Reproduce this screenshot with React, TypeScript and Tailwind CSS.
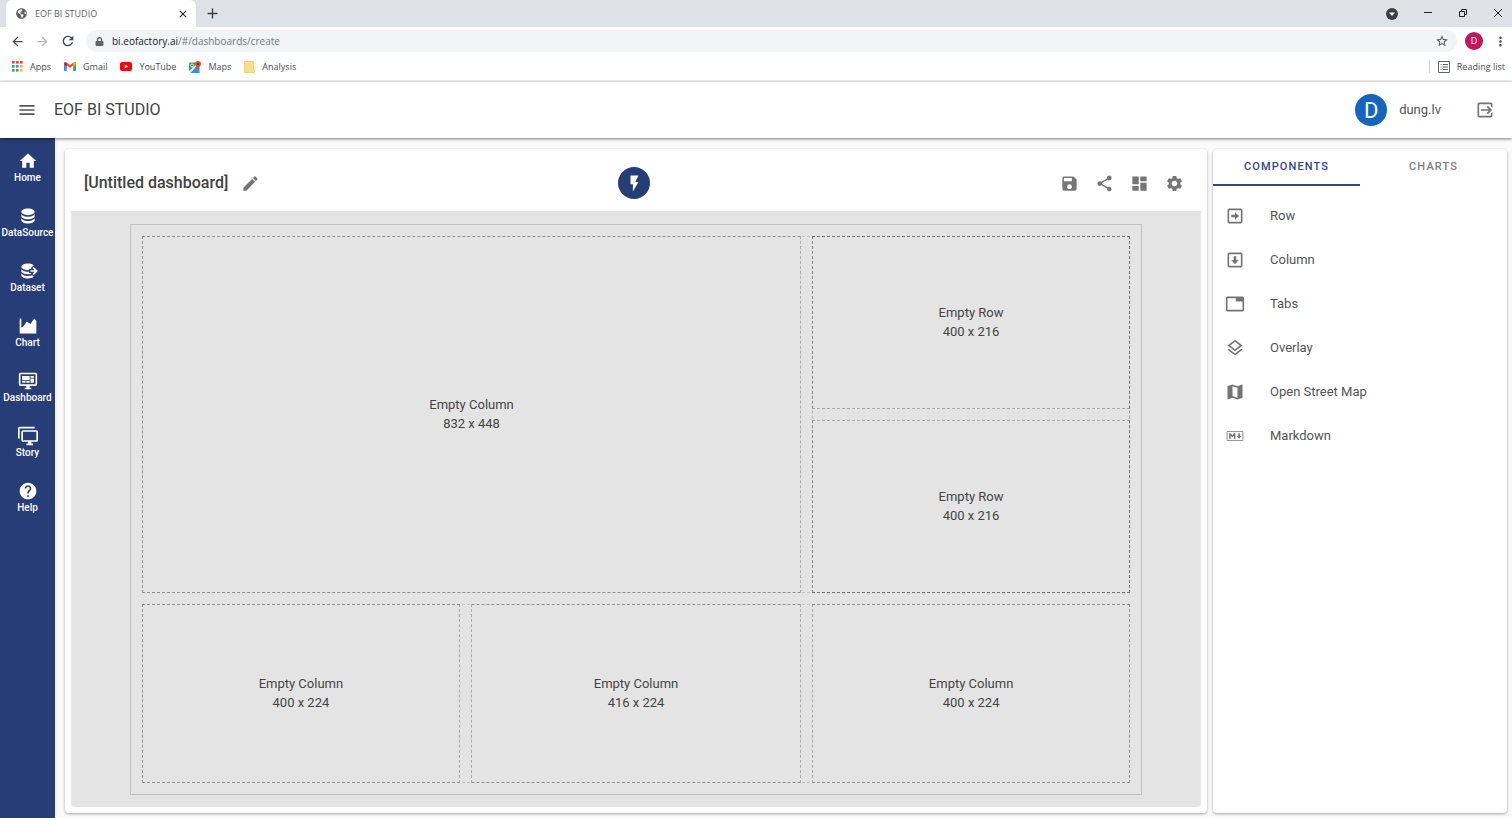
import type { ReactNode } from "react";
import { MdSave, MdShare, MdDashboard, MdSettings, MdEdit, MdFlashOn, MdHelp, MdMap, MdStarBorder, MdArrowBack, MdArrowForward, MdRefresh, MdClose, MdAdd, MdMoreVert } from "react-icons/md";
import { FaGlobeAmericas, FaLock } from "react-icons/fa";

function Glyph({ d, className = "size-5" }: { d: string; className?: string }) {
  return (
    <svg viewBox="0 0 24 24" className={className} fill="currentColor" fillRule="evenodd" aria-hidden="true">
      <path d={d} />
    </svg>
  );
}

const paths = {
  menu: "M3,6H21V8H3V6M3,11H21V13H3V11M3,16H21V18H3V16Z",
  logout:
    "M14.08,15.59L16.67,13H7V11H16.67L14.08,8.41L15.5,7L20.5,12L15.5,17L14.08,15.59M19,3A2,2 0 0,1 21,5V9.67L19,7.67V5H5V19H19V16.33L21,14.33V19A2,2 0 0,1 19,21H5C3.89,21 3,20.1 3,19V5C3,3.89 3.89,3 5,3H19Z",
  home: "M10,20V14H14V20H19V12H22L12,3L2,12H5V20H10Z",
  database:
    "M12,3C7.58,3 4,4.79 4,7C4,9.21 7.58,11 12,11C16.42,11 20,9.21 20,7C20,4.79 16.42,3 12,3M4,9V12C4,14.21 7.58,16 12,16C16.42,16 20,14.21 20,12V9C20,11.21 16.42,13 12,13C7.58,13 4,11.21 4,9M4,14V17C4,19.21 7.58,21 12,21C16.42,21 20,19.21 20,17V14C20,16.21 16.42,18 12,18C7.58,18 4,16.21 4,14Z",
  dataset:
    "M12,3C7.58,3 4,4.79 4,7C4,9.21 7.58,11 12,11C12.5,11 13,10.97 13.5,10.92V9.5H16.39L15.39,8.5L18.9,5C17.5,3.8 14.94,3 12,3M18.92,7.08L17.5,8.5L20,11H15V13H20L17.5,15.5L18.92,16.92L23.84,12M4,9V12C4,14.21 7.58,16 12,16C13.17,16 14.26,15.85 15.25,15.63L16.38,14.5H13.5V12.92C13,12.97 12.5,13 12,13C7.58,13 4,11.21 4,9M4,14V17C4,19.21 7.58,21 12,21C14.94,21 17.5,20.2 18.9,19L17,17.1C15.61,17.66 13.9,18 12,18C7.58,18 4,16.21 4,14Z",
  chart: "M2,3H4V14L7,12L10.5,6.5L15,9.5L19.5,3L22,6V21H2V3Z",
  dashboard:
    "M21,16V4H3V16H21M21,2A2,2 0 0,1 23,4V16A2,2 0 0,1 21,18H14V20H16V22H8V20H10V18H3C1.89,18 1,17.1 1,16V4C1,2.89 1.89,2 3,2H21M5,6H14V11H5V6M15,6H19V8H15V6M19,9V14H15V9H19M5,12H9V14H5V12M10,12H14V14H10V12Z",
  story:
    "M22,17V7H6V17H22M22,5A2,2 0 0,1 24,7V17C24,18.11 23.1,19 22,19H16V21H18V23H10V21H12V19H6C4.89,19 4,18.11 4,17V7A2,2 0 0,1 6,5H22M2,3V15H0V3A2,2 0 0,1 2,1H20V3H2Z",
  row: "M5,3H19A2,2 0 0,1 21,5V19A2,2 0 0,1 19,21H5A2,2 0 0,1 3,19V5A2,2 0 0,1 5,3M5,5V19H19V5H5M12,7.500L17,12L12,16.500V13.500H7.500V10.500H12V7.500Z",
  column: "M5,3H19A2,2 0 0,1 21,5V19A2,2 0 0,1 19,21H5A2,2 0 0,1 3,19V5A2,2 0 0,1 5,3M5,5V19H19V5H5M7.500,12H10.500V7.500H13.500V12H16.500L12,17L7.500,12Z",
  tabs: "M3,3H21A2,2 0 0,1 23,5V19A2,2 0 0,1 21,21H3A2,2 0 0,1 1,19V5A2,2 0 0,1 3,3M3,5V19H21V9H13V5H3Z",
  overlay:
    "M12,18.54L19.37,12.8L21,14.07L12,21.07L3,14.07L4.62,12.81L12,18.54M12,16L3,9L12,2L21,9L12,16M12,4.53L6.26,9L12,13.47L17.74,9L12,4.53Z",
  markdown:
    "M20.56 18H3.44C2.65 18 2 17.37 2 16.59V7.41C2 6.63 2.65 6 3.44 6H20.56C21.35 6 22 6.63 22 7.41V16.59C22 17.37 21.35 18 20.56 18M3.44 6.94C3.18 6.94 2.96 7.15 2.96 7.41V16.6C2.96 16.85 3.18 17.06 3.44 17.06H20.56C20.82 17.06 21.04 16.85 21.04 16.6V7.41C21.04 7.15 20.82 6.94 20.56 6.94H3.44M4.89 15.19V8.81H6.81L8.73 11.16L10.65 8.81H12.58V15.19H10.65V11.53L8.73 13.88L6.81 11.53V15.19H4.89M16.9 15.19L14 12.09H15.92V8.81H17.85V12.09H19.77L16.9 15.19",
};

function AppsIcon() {
  const colors = ["#ea4335", "#ea4335", "#ea4335", "#34a853", "#4285f4", "#fbbc05", "#34a853", "#34a853", "#fbbc05"];
  return (
    <svg viewBox="0 0 11 11" className="size-[11px]" aria-hidden="true">
      {colors.map((c, i) => (
        <rect key={i} x={(i % 3) * 4} y={Math.floor(i / 3) * 4} width="2.6" height="2.6" fill={c} />
      ))}
    </svg>
  );
}

function GmailIcon() {
  return (
    <svg viewBox="0 0 24 18" className="h-[9px] w-3" aria-hidden="true">
      <path d="M0 2v14.4C0 17.3.7 18 1.6 18h3.9V7z" fill="#4285f4" />
      <path d="M24 2v14.4c0 .9-.7 1.6-1.6 1.6h-3.900V7z" fill="#34a853" />
      <path d="M0 2.500C0 .2 2.600-.8 4.400.6L12 6.300 19.600.6C21.400-.8 24 .2 24 2.500l-12 9-12-9z" fill="#ea4335" />
      <path d="M18.500 1.500C21-1 24 .5 24 2.500v2.200L18.500 9z" fill="#fbbc04" />
      <path d="M0 2.500v2.200L5.500 9V1.500z" fill="#c5221f" />
    </svg>
  );
}

function YouTubeIcon() {
  return (
    <svg viewBox="0 0 12 9" className="h-[9px] w-3" aria-hidden="true">
      <rect width="12" height="9" rx="2.2" fill="#f00" />
      <path d="M4.800 2.600v3.800L8 4.500z" fill="#fff" />
    </svg>
  );
}

function MapsIcon() {
  return (
    <svg viewBox="0 0 24 24" className="size-3" aria-hidden="true">
      <rect y="3" width="21" height="21" rx="2" fill="#34a853" />
      <path d="M2 24 12 13l9 9v2z" fill="#4285f4" />
      <path d="M0 20 17 4h4L3 24H0z" fill="#e8eaed" />
      <path d="M4 24 12 15l9 9z" fill="#4285f4" />
      <circle cx="6" cy="9" r="3" fill="none" stroke="#fff" strokeWidth="1.500" />
      <path d="M18 0a6 6 0 0 0-6 6c0 4 5 6 6 11 1-5 6-7 6-11a6 6 0 0 0-6-6z" fill="#ea4335" />
      <circle cx="18" cy="6" r="2" fill="#8c1d18" />
    </svg>
  );
}

function FolderIcon() {
  return (
    <svg viewBox="0 0 11 12" className="h-3 w-[11px]" aria-hidden="true">
      <path d="M.5.500h9V8l1 1v2.500H.5z" fill="#fbe08a" stroke="#e8c65a" strokeWidth=".7" />
    </svg>
  );
}

const bookmarks: [string, ReactNode][] = [
  ["Apps", <AppsIcon />],
  ["Gmail", <GmailIcon />],
  ["YouTube", <YouTubeIcon />],
  ["Maps", <MapsIcon />],
  ["Analysis", <FolderIcon />],
];

function Browser() {
  return (
    <div className="font-['Open_Sans','Noto_Sans',sans-serif] text-[9px] text-[#4a4d51]">
      <div className="flex h-[27px] items-center bg-[#dee1e6] pl-1.5">
        <div className="flex h-full w-[190px] items-center rounded-t-md bg-white pr-[7px] pl-2.5">
          <FaGlobeAmericas className="size-[11px] text-[#5f6368]" />
          <span className="ml-2 flex-1 text-[#5f6368]">EOF BI STUDIO</span>
          <button aria-label="Close tab"><MdClose className="size-3 text-[#202124]" /></button>
        </div>
        <button aria-label="New tab" className="ml-2"><MdAdd className="size-[17px] text-[#3c4043]" /></button>
        <div className="ml-auto flex items-center gap-[25px] pr-[9px] text-[#202124]">
          <button aria-label="Search tabs" className="flex size-3 items-center justify-center rounded-full bg-[#3c4043]">
            <svg viewBox="0 0 6 6" className="size-1.5" aria-hidden="true"><path d="M0 1.500h6L3 5z" fill="#fff" /></svg>
          </button>
          <button aria-label="Minimize">
            <svg viewBox="0 0 10 10" className="size-2.5" stroke="currentColor" aria-hidden="true"><path d="M1 3.500h8" /></svg>
          </button>
          <button aria-label="Restore">
            <svg viewBox="0 0 10 10" className="size-2.5" fill="none" stroke="currentColor" aria-hidden="true"><path d="M1.500 2.500h5v5h-5zM3.500 2V.500h5v5H7" /></svg>
          </button>
          <button aria-label="Close window">
            <svg viewBox="0 0 10 10" className="size-2.5" stroke="currentColor" aria-hidden="true"><path d="M1 0l8 8M9 0l-8 8" /></svg>
          </button>
        </div>
      </div>
      <div className="flex h-7 items-center bg-white pr-1 pl-2.5">
        <button aria-label="Back"><MdArrowBack className="size-[15px] text-[#45494d]" /></button>
        <button aria-label="Forward" className="ml-2.5"><MdArrowForward className="size-[15px] text-[#b5b7ba]" /></button>
        <button aria-label="Reload" className="ml-2.5"><MdRefresh className="size-4 text-[#45494d]" /></button>
        <div className="ml-2.5 flex h-[22px] flex-1 items-center rounded-full bg-[#f1f3f4] px-2">
          <FaLock className="ml-px size-[9px] text-[#5f6368]" />
          <span className="ml-2 flex-1 text-[10px] text-[#75797e]"><span className="text-[#202124]">bi.eofactory.ai</span>/#/dashboards/create</span>
          <button aria-label="Bookmark"><MdStarBorder className="size-[14px] text-[#4a4d51]" /></button>
        </div>
        <span className="ml-2 flex size-[18px] items-center justify-center rounded-full bg-[#c2185b] text-white">D</span>
        <button aria-label="Browser menu" className="ml-2.5"><MdMoreVert className="size-[15px]" /></button>
      </div>
      <div className="flex h-[27px] items-center border-b-2 border-[#eeeff1] bg-white pr-[7px] pb-0.5 pl-3">
        <nav className="flex items-center gap-[13px]">
          {bookmarks.map(([name, icon]) => (
            <a key={name} href="#" className="flex items-center gap-[7px]">{icon}{name}</a>
          ))}
        </nav>
        <button className="ml-auto flex items-center gap-[7px] border-l border-[#d0d2d5] pl-2">
          <svg viewBox="0 0 12 12" className="size-3" fill="none" stroke="#5f6368" aria-hidden="true"><path d="M.5.500h11v11H.5zM2.500 3.500h1M5 3.500h5M2.500 6h1M5 6h5M2.500 8.500h1M5 8.500h5" /></svg>
          Reading list
        </button>
      </div>
    </div>
  );
}

const navItems: [string, ReactNode][] = [
  ["Home", <Glyph d={paths.home} />],
  ["DataSource", <Glyph d={paths.database} />],
  ["Dataset", <Glyph d={paths.dataset} />],
  ["Chart", <Glyph d={paths.chart} />],
  ["Dashboard", <Glyph d={paths.dashboard} />],
  ["Story", <Glyph d={paths.story} />],
  ["Help", <MdHelp className="size-5" />],
];

const components: [string, ReactNode][] = [
  ["Row", <Glyph d={paths.row} />],
  ["Column", <Glyph d={paths.column} />],
  ["Tabs", <Glyph d={paths.tabs} />],
  ["Overlay", <Glyph d={paths.overlay} />],
  ["Open Street Map", <MdMap className="size-5" />],
  ["Markdown", <Glyph d={paths.markdown} />],
];

function Cell({ kind, w, h, className }: { kind: string; w: number; h: number; className: string }) {
  return (
    <div className={`flex basis-0 flex-col items-center justify-center border border-dashed border-black/25 text-[13px] leading-[19px] text-[#444] ${className}`}>
      <span>Empty {kind}</span>
      <span>{w} x {h}</span>
    </div>
  );
}

function Canvas() {
  return (
    <div className="flex flex-1 rounded-b-sm bg-[#e4e4e4] px-[59px] pt-[13px] pb-3">
      <div className="flex flex-1 flex-col gap-[11px] border border-[#c0c0c0] p-[11px]">
        <div className="flex grow-2 basis-0 border border-dashed border-black/15">
          <div className="-m-px flex flex-1 gap-[11px]">
            <Cell kind="Column" w={832} h={448} className="grow-832" />
            <div className="flex grow-400 basis-0 border border-dashed border-black/20">
              <div className="-m-px flex flex-1 flex-col gap-[11px]">
                <Cell kind="Row" w={400} h={216} className="grow" />
                <Cell kind="Row" w={400} h={216} className="grow" />
              </div>
            </div>
          </div>
        </div>
        <div className="flex grow basis-0 border border-dashed border-black/15">
          <div className="-m-px flex flex-1 gap-[11px]">
            <Cell kind="Column" w={400} h={224} className="grow-400" />
            <Cell kind="Column" w={416} h={224} className="grow-416" />
            <Cell kind="Column" w={400} h={224} className="grow-400" />
          </div>
        </div>
      </div>
    </div>
  );
}

export default function App() {
  return (
    <div className="flex min-h-screen flex-col bg-[#fafafa] font-[Roboto,sans-serif]">
      <Browser />
      <header className="z-10 flex h-14 items-center bg-white px-[17px] text-[#555] shadow-[0_1px_3px_rgba(0,0,0,0.5)]">
        <button aria-label="Menu"><Glyph d={paths.menu} /></button>
        <h1 className="ml-[17px] text-base text-[#424242]">EOF BI STUDIO</h1>
        <span className="ml-auto flex size-8 items-center justify-center rounded-full bg-[#1565c0] text-[22px] text-white">D</span>
        <span className="ml-3 text-[13px]">dung.lv</span>
        <button aria-label="Sign out" className="ml-[34px] text-[#757575]"><Glyph d={paths.logout} /></button>
      </header>
      <div className="flex flex-1">
        <nav className="flex w-[55px] shrink-0 flex-col bg-[#263d78] pt-[13px] shadow-sm">
          {navItems.map(([name, icon]) => (
            <a key={name} href="#" className="flex h-[55px] flex-col items-center text-[10px] leading-[14px] font-medium text-white">
              {icon}
              {name}
            </a>
          ))}
        </nav>
        <main className="flex min-w-0 flex-1 gap-1.5 pt-[11px] pr-[5px] pb-[5px] pl-2.5">
          <section className="flex flex-1 flex-col rounded-sm bg-white px-1.5 pb-1.5 shadow-[0_1px_3px_rgba(0,0,0,0.35)]">
            <div className="grid h-[62px] grid-cols-[1fr_auto_1fr] items-center pt-1.5 pr-[17px] pl-[13px] text-[#757575]">
              <div className="flex items-center gap-[13px]">
                <h2 className="text-base font-medium text-[#424242]">[Untitled dashboard]</h2>
                <button aria-label="Rename"><MdEdit className="size-[19px]" /></button>
              </div>
              <button aria-label="Run" className="flex size-8 items-center justify-center rounded-full bg-[#263d78] text-white">
                <MdFlashOn className="size-[19px]" />
              </button>
              <div className="flex justify-end gap-4">
                <button aria-label="Save"><MdSave className="size-[19px]" /></button>
                <button aria-label="Share"><MdShare className="size-[19px]" /></button>
                <button aria-label="Layout"><MdDashboard className="size-[19px]" /></button>
                <button aria-label="Settings"><MdSettings className="size-[19px]" /></button>
              </div>
            </div>
            <Canvas />
          </section>
          <aside className="w-[294px] shrink-0 rounded-sm bg-white shadow-[0_1px_3px_rgba(0,0,0,0.35)]">
            <div role="tablist" className="flex h-[37px] text-[11px] font-medium tracking-widest">
              <button role="tab" aria-selected="true" className="flex-1 border-b-2 border-[#34458c] pt-0.5 text-[#34458c]">COMPONENTS</button>
              <button role="tab" aria-selected="false" className="flex-1 border-b-2 border-transparent pt-0.5 text-[#808080]">CHARTS</button>
            </div>
            <ul className="pt-2">
              {components.map(([name, icon]) => (
                <li key={name} className="flex h-11 items-center gap-[25px] pl-3 text-[13px] text-[#555]">
                  <span className="text-[#757575]">{icon}</span>
                  {name}
                </li>
              ))}
            </ul>
          </aside>
        </main>
      </div>
    </div>
  );
}
